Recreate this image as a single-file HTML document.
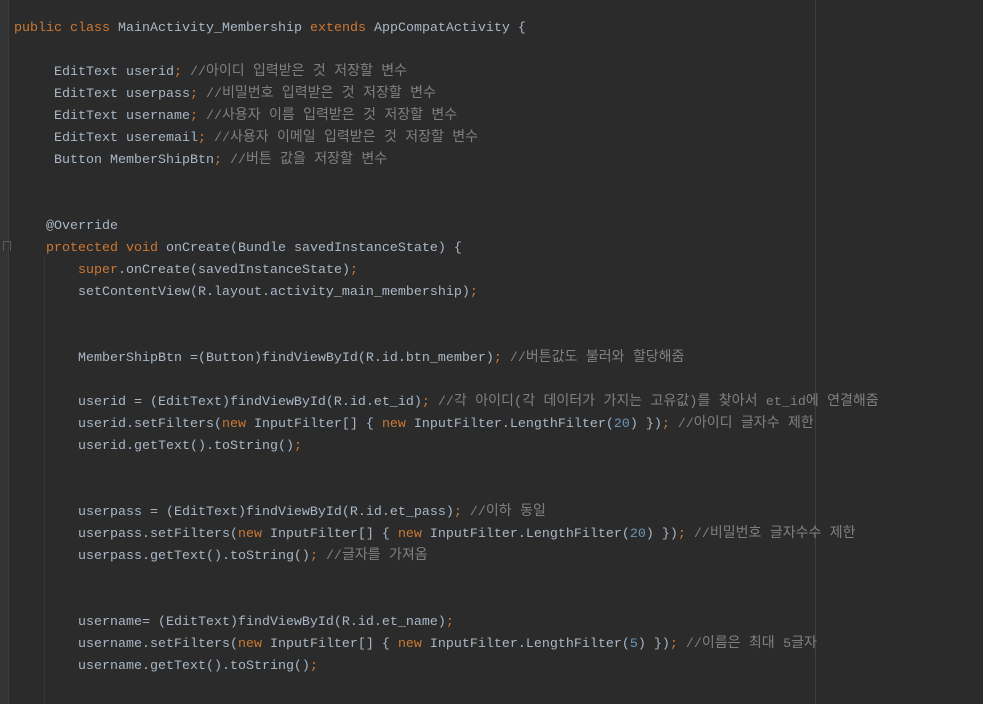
<!DOCTYPE html>
<html><head><meta charset="utf-8"><style>
html,body{margin:0;padding:0;background:#2b2b2b;width:983px;height:704px;overflow:hidden;position:relative}
.g{position:absolute;left:0;top:0;width:8px;height:704px;background:#313335;border-right:1px solid #3c3c3c}
.ig{position:absolute;left:44px;top:258px;width:1px;height:446px;background:#373737}
.m{position:absolute;left:815px;top:0;width:1px;height:704px;background:#3f3f3f}
.fold{position:absolute;left:3px;top:241px;width:8px;height:10px;border:1px solid #5a5a5a;border-bottom:none;box-sizing:border-box}
pre{position:absolute;left:14px;top:18px;margin:0;font-family:"Liberation Mono","Noto Sans CJK KR",monospace;font-size:13.33px;line-height:22px;color:#a9b7c6}
pre div{height:22px;line-height:22px;white-space:pre;overflow:visible}
.k{color:#cc7832}.c{color:#808080}.n{color:#6897bb}
.c span{font-size:14px;line-height:1}
</style></head><body>
<div class="g"></div><div class="fold"></div><div class="ig"></div><div class="m"></div>
<pre><div><span class="k">public class</span> MainActivity_Membership <span class="k">extends</span> AppCompatActivity {</div><div></div><div>     EditText userid<span class="k">;</span> <span class="c">//<span>아이디 입력받은 것 저장할 변수</span></span></div><div>     EditText userpass<span class="k">;</span> <span class="c">//<span>비밀번호 입력받은 것 저장할 변수</span></span></div><div>     EditText username<span class="k">;</span> <span class="c">//<span>사용자 이름 입력받은 것 저장할 변수</span></span></div><div>     EditText useremail<span class="k">;</span> <span class="c">//<span>사용자 이메일 입력받은 것 저장할 변수</span></span></div><div>     Button MemberShipBtn<span class="k">;</span> <span class="c">//<span>버튼 값을 저장할 변수</span></span></div><div></div><div></div><div>    @Override</div><div>    <span class="k">protected void</span> onCreate(Bundle savedInstanceState) {</div><div>        <span class="k">super</span>.onCreate(savedInstanceState)<span class="k">;</span></div><div>        setContentView(R.layout.activity_main_membership)<span class="k">;</span></div><div></div><div></div><div>        MemberShipBtn =(Button)findViewById(R.id.btn_member)<span class="k">;</span> <span class="c">//<span>버튼값도 불러와 할당해줌</span></span></div><div></div><div>        userid = (EditText)findViewById(R.id.et_id)<span class="k">;</span> <span class="c">//<span>각 아이디(각 데이터가 가지는 고유값)를 찾아서 </span>et_id<span>에 연결해줌</span></span></div><div>        userid.setFilters(<span class="k">new</span> InputFilter[] { <span class="k">new</span> InputFilter.LengthFilter(<span class="n">20</span>) })<span class="k">;</span> <span class="c">//<span>아이디 글자수 제한</span></span></div><div>        userid.getText().toString()<span class="k">;</span></div><div></div><div></div><div>        userpass = (EditText)findViewById(R.id.et_pass)<span class="k">;</span> <span class="c">//<span>이하 동일</span></span></div><div>        userpass.setFilters(<span class="k">new</span> InputFilter[] { <span class="k">new</span> InputFilter.LengthFilter(<span class="n">20</span>) })<span class="k">;</span> <span class="c">//<span>비밀번호 글자수수 제한</span></span></div><div>        userpass.getText().toString()<span class="k">;</span> <span class="c">//<span>글자를 가져옴</span></span></div><div></div><div></div><div>        username= (EditText)findViewById(R.id.et_name)<span class="k">;</span></div><div>        username.setFilters(<span class="k">new</span> InputFilter[] { <span class="k">new</span> InputFilter.LengthFilter(<span class="n">5</span>) })<span class="k">;</span> <span class="c">//<span>이름은 최대 </span>5<span>글자</span></span></div><div>        username.getText().toString()<span class="k">;</span></div></pre>
</body></html>
